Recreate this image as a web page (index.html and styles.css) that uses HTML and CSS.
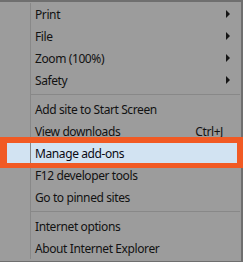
FILE: index.html
```html
<!DOCTYPE html>
<html lang="en">
<head>
    <meta charset="UTF-8">
    <title>Tools menu</title>
    <link rel="stylesheet" href="styles.css">
</head>
<body>
    <div class="menu">
        <ul class="menu-list">
            <li class="menu-item">Print<span class="arrow"></span></li>
            <li class="menu-item">File<span class="arrow"></span></li>
            <li class="menu-item">Zoom (100%)<span class="arrow"></span></li>
            <li class="menu-item">Safety<span class="arrow"></span></li>
            <li class="separator"></li>
            <li class="menu-item">Add site to Start Screen</li>
            <li class="menu-item">View downloads<span class="shortcut">Ctrl+J</span></li>
            <li class="menu-item is-hover">Manage add-ons<span class="callout"></span></li>
            <li class="menu-item">F12 developer tools</li>
            <li class="menu-item">Go to pinned sites</li>
            <li class="separator"></li>
            <li class="menu-item">Internet options</li>
            <li class="menu-item">About Internet Explorer</li>
        </ul>
    </div>
</body>
</html>
```

FILE: styles.css
```css
:root {
    --menu-bg: #9c9c9c;
    --menu-border: #6f6f6f;
    --line-color: #888888;
    --text-color: #121212;
    --hover-bg: #d2e3f2;
    --callout-color: #f15a24;
}

* {
    margin: 0;
    padding: 0;
    box-sizing: border-box;
}

body {
    font-family: 'Noto Sans', sans-serif;
    font-size: 12px;
    letter-spacing: -0.4px;
    color: var(--text-color);
}

.menu {
    width: 243px;
    height: 262px;
    background-color: var(--menu-bg);
    border-top: 2px solid var(--menu-border);
    border-right: 2px solid var(--menu-border);
    border-bottom: 1px solid var(--menu-border);
    padding: 1px 0 2px 0;
}

.menu-list {
    list-style: none;
    background: linear-gradient(to right, transparent 30px, var(--line-color) 30px, var(--line-color) 31px, transparent 31px);
}

.menu-item {
    position: relative;
    display: flex;
    align-items: center;
    height: 22px;
    padding-left: 35px;
    padding-right: 10px;
}

.arrow {
    margin-left: auto;
    margin-right: 1px;
    width: 0;
    height: 0;
    border-top: 4px solid transparent;
    border-bottom: 4px solid transparent;
    border-left: 4px solid #161616;
}

.shortcut {
    margin-left: auto;
    margin-right: 8px;
}

.separator {
    height: 7px;
    padding: 3px 1px 3px 31px;
}

.separator::before {
    content: "";
    display: block;
    height: 1px;
    background-color: var(--line-color);
}

.is-hover {
    color: #0a0a14;
    background: linear-gradient(to right, transparent 30px, var(--line-color) 30px, var(--line-color) 31px, transparent 31px), var(--hover-bg);
}

.callout {
    position: absolute;
    top: -5px;
    bottom: -4px;
    left: 0;
    right: -2px;
    border-style: solid;
    border-color: var(--callout-color);
    border-width: 6px 6px 5px 7px;
}
```
